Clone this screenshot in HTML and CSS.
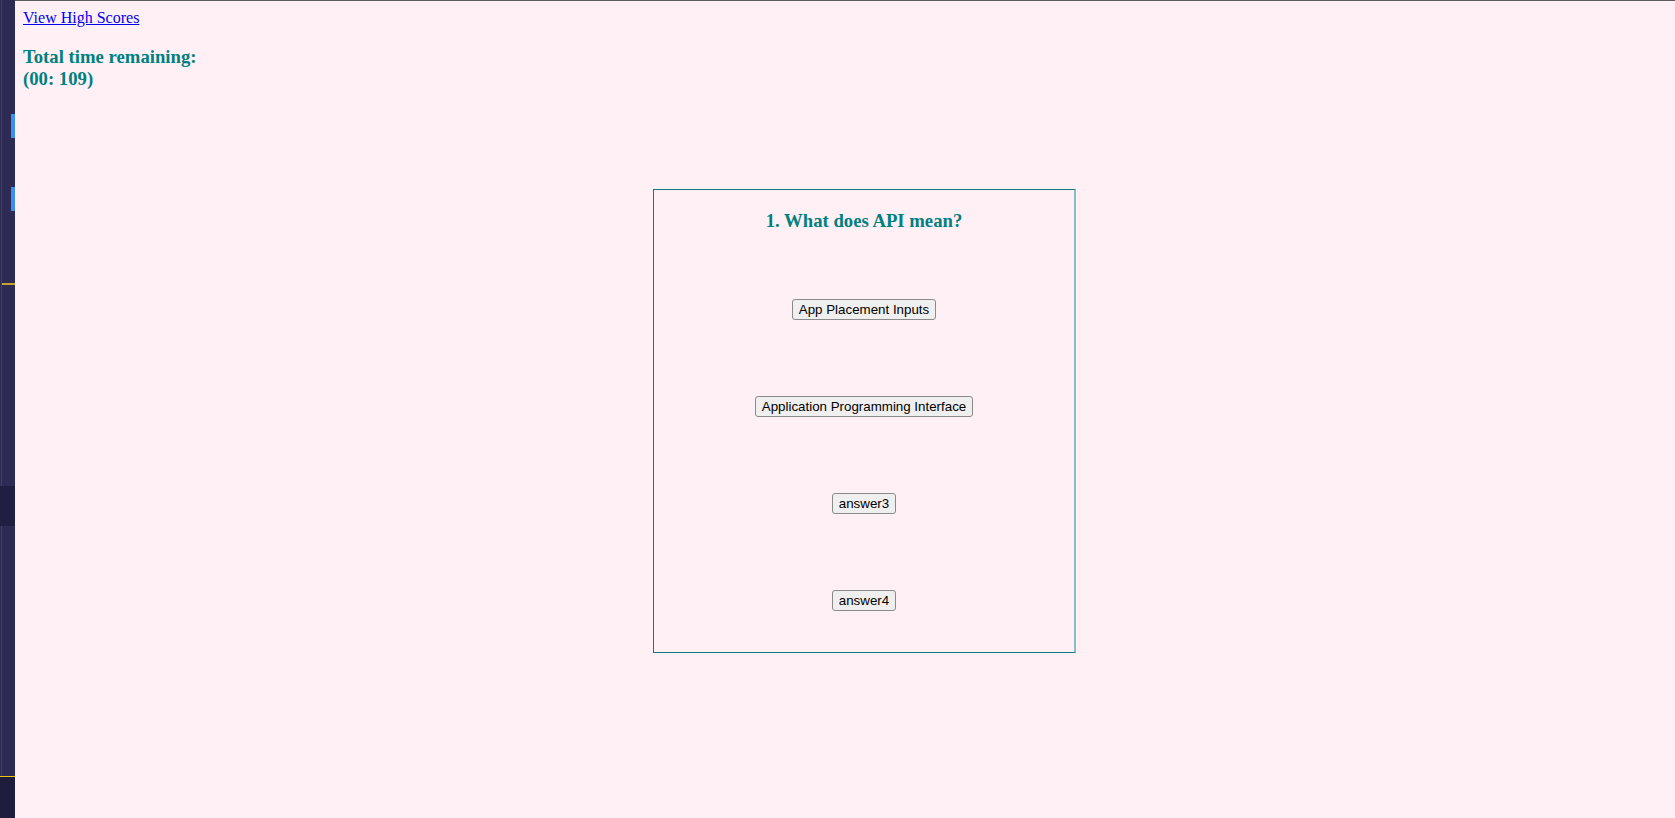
FILE: index.html
```html
<!DOCTYPE html>
<html lang="en">
<head>
<meta charset="utf-8">
<title>Code Quiz</title>
<link rel="stylesheet" href="styles.css">
</head>
<body>
  <aside class="strip">
    <div class="strip-gap g1"></div>
    <div class="strip-mark"></div>
    <div class="strip-gap g2"></div>
    <div class="strip-mark"></div>
    <div class="strip-gap g3"></div>
    <div class="strip-rule"></div>
    <div class="strip-gap g4"></div>
    <div class="strip-band"></div>
    <div class="strip-gap g5"></div>
    <div class="strip-foot"></div>
  </aside>
  <main class="page">
    <a class="scores-link" href="#">View High Scores</a>
    <h3 class="timer">Total time remaining:<br>(00: 109)</h3>
    <div class="quiz-wrap">
      <section class="quiz">
        <h3 class="question">1. What does API mean?</h3>
        <div class="answers">
          <button class="answer">App Placement Inputs</button>
          <button class="answer">Application Programming Interface</button>
          <button class="answer">answer3</button>
          <button class="answer">answer4</button>
        </div>
      </section>
    </div>
  </main>
</body>
</html>
```

FILE: styles.css
```css
html, body {
  margin: 0;
  padding: 0;
  height: 100%;
}

body {
  display: flex;
  overflow: hidden;
  font-family: "Liberation Serif", "Times New Roman", serif;
  background: #2d2a54;
}

.strip {
  width: 15px;
  flex: none;
  display: flex;
  flex-direction: column;
  background: #2d2a54;
  box-shadow: inset 1px 0 0 #2d2a54, inset 2px 0 0 #423e6a;
}

.strip-gap { flex: none; }
.g1 { height: 114px; }
.g2 { height: 49px; }
.g3 { height: 72px; }
.g4 { height: 201px; }
.g5 { height: 250px; }

.strip-mark {
  height: 24px;
  width: 4px;
  margin-left: 11px;
  background: #3b8ff4;
}

.strip-rule {
  height: 2px;
  margin-left: 2px;
  background: #c6a232;
}

.strip-band {
  height: 40px;
  background: #201f41;
}

.strip-foot {
  flex: 1;
  background: #1e1d3e;
  border-top: 1px solid #f3c412;
}

.page {
  flex: 1;
  background: #fff0f5;
  border-top: 1px solid #5b5b5b;
  padding: 8px;
}

.scores-link {
  color: #0000ee;
  font-size: 16px;
}

.timer {
  color: #008080;
  font-size: 18.72px;
  margin: 18.72px 0;
}

.quiz-wrap {
  display: flex;
  justify-content: center;
  padding-left: 39px;
  padding-top: 81px;
}

.quiz {
  width: 420px;
  height: 462px;
  border: 1px solid #137a7c;
  border-right: 2px solid #89bdc4;
  display: flex;
  flex-direction: column;
  align-items: center;
}

.question {
  color: #008080;
  font-size: 18.72px;
  margin: 19.5px 0 0;
}

.answers {
  display: flex;
  flex-direction: column;
  align-items: center;
  gap: 76px;
  padding-top: 67px;
}

.answer {
  font-family: "Liberation Sans", Arial, sans-serif;
  font-size: 13.33px;
  color: #000;
  background: #efefef;
  border: 1px solid #8a8a8a;
  border-radius: 3px;
  padding: 1px 6px;
  height: 21px;
  line-height: 17px;
}
```
